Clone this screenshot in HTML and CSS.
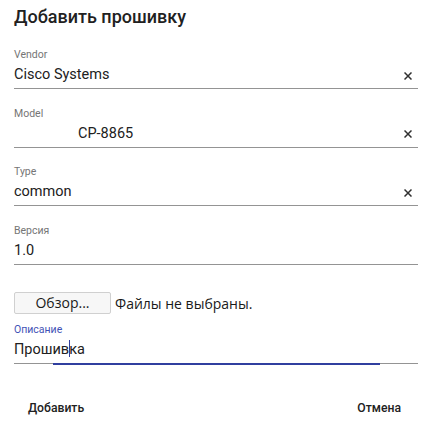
FILE: index.html
```html
<!DOCTYPE html>
<html lang="ru">
<head>
<meta charset="utf-8">
<title>Добавить прошивку</title>
<link rel="stylesheet" href="styles.css">
</head>
<body>
<div class="dialog">
  <h2 class="title">Добавить прошивку</h2>
  <div class="fields">
    <div class="field">
      <div class="label">Vendor</div>
      <div class="row"><span class="value">Cisco Systems</span><svg class="clear" viewBox="0 0 8 8"><path d="M0.5 0.5L7.5 7.5M7.5 0.5L0.5 7.5"/></svg></div>
      <div class="line"></div>
    </div>
    <div class="field">
      <div class="label">Model</div>
      <div class="row"><span class="value indent">CP-8865</span><svg class="clear" viewBox="0 0 8 8"><path d="M0.5 0.5L7.5 7.5M7.5 0.5L0.5 7.5"/></svg></div>
      <div class="line"></div>
    </div>
    <div class="field">
      <div class="label">Type</div>
      <div class="row"><span class="value">common</span><svg class="clear" viewBox="0 0 8 8"><path d="M0.5 0.5L7.5 7.5M7.5 0.5L0.5 7.5"/></svg></div>
      <div class="line"></div>
    </div>
    <div class="field">
      <div class="label">Версия</div>
      <div class="row"><span class="value">1.0</span></div>
      <div class="line"></div>
    </div>
  </div>
  <div class="file-row">
    <span class="file-btn">Обзор...</span>
    <span class="file-text">Файлы не выбраны.</span>
  </div>
  <div class="field focused">
    <div class="label">Описание</div>
    <div class="row"><span class="value">Прошив<span class="caret"></span>ка</span></div>
    <div class="line"><span class="ripple"></span></div>
  </div>
  <div class="actions">
    <span class="action">Добавить</span>
    <span class="action">Отмена</span>
  </div>
</div>
</body>
</html>
```

FILE: styles.css
```css
html, body {
  margin: 0;
  padding: 0;
  background: #ffffff;
}
body {
  font-family: Roboto, "Liberation Sans", sans-serif;
  color: rgba(0, 0, 0, 0.87);
}
.dialog {
  width: 404px;
  padding: 5px 15px 0 14px;
}
.title {
  margin: 0;
  font-size: 18px;
  line-height: 24px;
  font-weight: 500;
  color: #212121;
}
.fields {
  margin-top: 19px;
  display: flex;
  flex-direction: column;
  gap: 17.5px;
}
.field {
  display: flex;
  flex-direction: column;
}
.label {
  font-size: 10.5px;
  line-height: 12px;
  height: 12px;
  padding-top: 1px;
  color: #757575;
}
.row {
  margin-top: 3px;
  height: 20px;
  display: flex;
  align-items: center;
  font-size: 14.5px;
  line-height: 20px;
  color: #212121;
}
.value {
  flex: 1;
  white-space: nowrap;
  padding-top: 2px;
}
.indent {
  padding-left: 64px;
}
.clear {
  width: 8px;
  height: 8px;
  margin-right: 6px;
  margin-top: 3px;
  fill: none;
  stroke: #303030;
  stroke-width: 1.5;
}
.line {
  position: relative;
  margin-top: 4px;
  height: 1px;
  background: #949494;
}
.file-row {
  margin-top: 27.5px;
  display: flex;
  align-items: center;
  gap: 4px;
  font-family: "Open Sans", "Noto Sans", sans-serif;
  font-size: 14px;
  color: #1a1a1a;
}
.file-btn {
  box-sizing: border-box;
  width: 97px;
  height: 22px;
  line-height: 20px;
  text-align: center;
  background: #f7f7f7;
  border: 1px solid #d0d0d0;
  border-radius: 2px;
}
.focused {
  margin-top: 9px;
}
.focused .label {
  color: #3f51b5;
}
.caret {
  display: inline-block;
  width: 1px;
  height: 17px;
  margin-right: -1px;
  vertical-align: -3px;
  background: #303f9f;
}
.ripple {
  position: absolute;
  top: 0;
  left: 39px;
  width: 327px;
  height: 2px;
  background: #303f9f;
}
.actions {
  margin-top: 26px;
  margin-left: -2px;
  margin-right: 1px;
  display: flex;
  justify-content: space-between;
}
.action {
  padding: 0 16px;
  height: 36px;
  line-height: 36px;
  font-size: 12.2px;
  font-weight: 500;
  color: #212121;
}
```
